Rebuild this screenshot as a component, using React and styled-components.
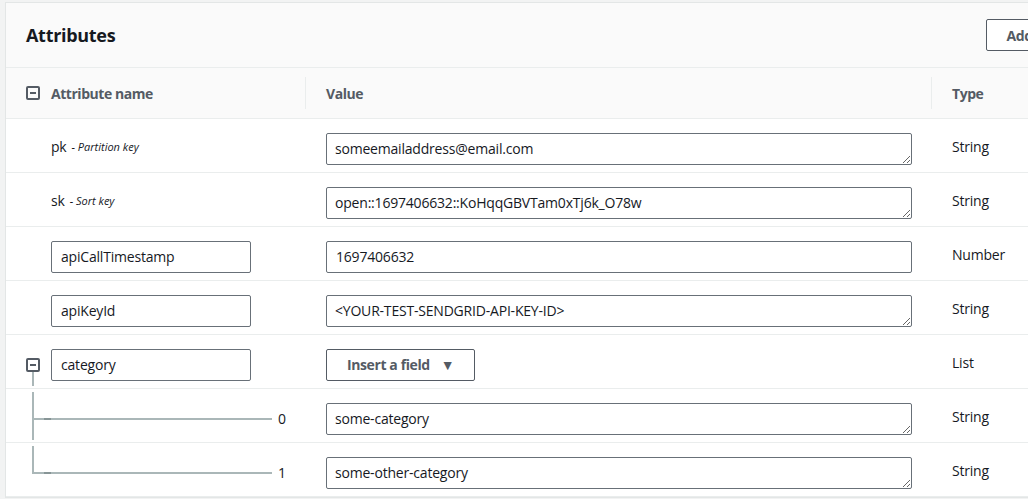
import React from "react";
import styled, { createGlobalStyle } from "styled-components";

const GlobalStyle = createGlobalStyle`
  html, body {
    margin: 0;
    padding: 0;
    background: #f2f3f3;
    overflow: hidden;
  }
  body {
    font-family: "Open Sans", "Liberation Sans", sans-serif;
    font-size: 14px;
    letter-spacing: -0.2px;
    color: #16191f;
  }
`;

const Panel = styled.div`
  width: 1131px;
  margin: 2px 0 0 5px;
  background: #fff;
  border: 1px solid #e3e6e6;
`;

const PanelHeader = styled.div`
  display: flex;
  align-items: center;
  justify-content: space-between;
  height: 64px;
  padding: 0 20px;
  background: #fafafa;
  border-bottom: 1px solid #eaeded;
`;

const Title = styled.h2`
  margin: 0;
  font-size: 18px;
  font-weight: 700;
  letter-spacing: -0.3px;
  color: #16191f;
`;

const Button = styled.button`
  display: inline-flex;
  align-items: center;
  gap: 11px;
  height: 32px;
  padding: 0 20px;
  background: #fff;
  border: 1px solid #545b64;
  border-radius: 2px;
  font-family: inherit;
  font-size: 14px;
  font-weight: 700;
  letter-spacing: -0.4px;
  color: #545b64;
  cursor: pointer;
`;

const Row = styled.div`
  display: grid;
  grid-template-columns: 299px 626px 1fr;
  grid-template-rows: 100%;
  height: ${({ $head }) => ($head ? "50px" : "53px")};
  background: ${({ $head }) => ($head ? "#fafafa" : "#fff")};
  border-bottom: 1px solid #eaeded;
`;

const HeadCell = styled.div`
  display: flex;
  align-items: center;
  gap: 11px;
  padding-left: ${({ $first }) => ($first ? "20px" : "0")};
  font-weight: 700;
  letter-spacing: -0.45px;
  color: #545b64;
`;

const Divider = styled.span`
  width: 1px;
  height: 32px;
  margin-right: 9px;
  background: #eaeded;
`;

const Cell = styled.div`
  display: flex;
  align-items: center;
  box-sizing: border-box;
  height: 53px;
  padding-left: ${({ $pad }) => $pad || "21px"};
  padding-top: ${({ $control }) => ($control ? "6px" : "2px")};
`;

const NameCell = styled(Cell)`
  gap: 11px;
  align-items: stretch;
  padding-top: 0;
`;

const CollapseIcon = styled.span`
  position: relative;
  flex: none;
  width: 14px;
  height: 14px;
  box-sizing: border-box;
  border: 2px solid #545b64;
  border-radius: 2px;

  &::after {
    content: "";
    position: absolute;
    left: 2px;
    right: 2px;
    top: 4px;
    height: 2px;
    background: #545b64;
  }
`;

const IconColumn = styled.div`
  display: flex;
  flex-direction: column;
  align-items: center;
  width: 14px;
  padding-top: 23px;
  box-sizing: border-box;
`;

const StemLine = styled.div`
  flex: 1;
  width: 2px;
  margin-bottom: 2px;
  background: #aab7b8;
`;

const InputSlot = styled.div`
  display: flex;
  align-items: center;
  padding-top: 6px;
`;

const KeyName = styled.span`
  font-size: 14px;
  color: #16191f;
`;

const KeyHint = styled.span`
  margin-left: 5px;
  font-size: 11px;
  font-style: italic;
  letter-spacing: 0;
  color: #16191f;
`;

const NameInput = styled.input`
  width: 200px;
  height: 32px;
  box-sizing: border-box;
  padding: 0 9px;
  border: 1px solid #687078;
  border-radius: 2px;
  font-family: inherit;
  font-size: 14px;
  letter-spacing: -0.2px;
  color: #16191f;
  background: #fff;
`;

const ValueInput = styled(NameInput)`
  width: 586px;
`;

const ValueArea = styled.textarea`
  display: block;
  width: 586px;
  height: 32px;
  box-sizing: border-box;
  padding: 6px 8px;
  border: 1px solid #687078;
  border-radius: 2px;
  font-family: inherit;
  font-size: 14px;
  line-height: 18px;
  letter-spacing: -0.2px;
  color: #16191f;
  background: #fff;
  resize: vertical;
  overflow: hidden;
`;

const Caret = styled.span`
  font-size: 14px;
  color: #545b64;
`;

/* tree connector: vertical stem at 26px, branch at 29px from the row top */
const TreeCell = styled.div`
  display: flex;
  align-items: center;
  box-sizing: border-box;
  height: 53px;
  padding: 6px 0 0 272px;
  background:
    linear-gradient(#879596, #879596) 38px 29px / 7px 2px no-repeat,
    linear-gradient(#aab7b8, #aab7b8) 26px 29px / 240px 2px no-repeat,
    linear-gradient(#aab7b8, #aab7b8) 26px 3px /
      2px ${({ $last }) => ($last ? "28px" : "48px")} no-repeat;
`;

const TypeText = styled.span`
  color: #16191f;
`;

const keys = [
  { name: "pk", hint: "- Partition key", value: "someemailaddress@email.com", type: "String" },
  { name: "sk", hint: "- Sort key", value: "open::1697406632::KoHqqGBVTam0xTj6k_O78w", type: "String" },
];

const attrs = [
  { name: "apiCallTimestamp", value: "1697406632", type: "Number" },
  { name: "apiKeyId", value: "<YOUR-TEST-SENDGRID-API-KEY-ID>", type: "String" },
];

const items = ["some-category", "some-other-category"];

export default function App() {
  return (
    <>
      <GlobalStyle />
      <Panel>
        <PanelHeader>
          <Title>Attributes</Title>
          <Button>Add attribute</Button>
        </PanelHeader>

        <Row $head>
          <HeadCell $first>
            <CollapseIcon />
            Attribute name
          </HeadCell>
          <HeadCell>
            <Divider />
            Value
          </HeadCell>
          <HeadCell>
            <Divider />
            Type
          </HeadCell>
        </Row>

        {keys.map((k) => (
          <Row key={k.name}>
            <Cell $pad="45px">
              <KeyName>{k.name}</KeyName>
              <KeyHint>{k.hint}</KeyHint>
            </Cell>
            <Cell $control>
              <ValueArea rows={1} spellCheck={false} defaultValue={k.value} />
            </Cell>
            <Cell>
              <TypeText>{k.type}</TypeText>
            </Cell>
          </Row>
        ))}

        {attrs.map((a) => (
          <Row key={a.name}>
            <Cell $pad="45px" $control>
              <NameInput spellCheck={false} defaultValue={a.name} />
            </Cell>
            <Cell $control>
              {a.type === "Number" ? (
                <ValueInput spellCheck={false} defaultValue={a.value} />
              ) : (
                <ValueArea rows={1} spellCheck={false} defaultValue={a.value} />
              )}
            </Cell>
            <Cell>
              <TypeText>{a.type}</TypeText>
            </Cell>
          </Row>
        ))}

        <Row>
          <NameCell $pad="20px">
            <IconColumn>
              <CollapseIcon />
              <StemLine />
            </IconColumn>
            <InputSlot>
              <NameInput spellCheck={false} defaultValue="category" />
            </InputSlot>
          </NameCell>
          <Cell $control>
            <Button>
              Insert a field
              <Caret>▼</Caret>
            </Button>
          </Cell>
          <Cell>
            <TypeText>List</TypeText>
          </Cell>
        </Row>

        {items.map((v, i) => (
          <Row key={v}>
            <TreeCell $last={i === items.length - 1}>{i}</TreeCell>
            <Cell $control>
              <ValueArea rows={1} spellCheck={false} defaultValue={v} />
            </Cell>
            <Cell>
              <TypeText>String</TypeText>
            </Cell>
          </Row>
        ))}
      </Panel>
    </>
  );
}
